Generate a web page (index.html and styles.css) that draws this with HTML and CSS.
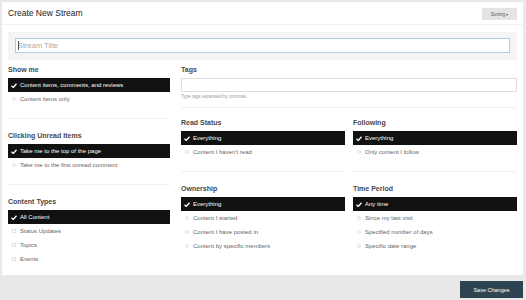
FILE: index.html
```html
<!DOCTYPE html>
<html>
  <head>
    <title>Create New Stream</title>
    <link rel="stylesheet" href="styles.css">
  </head>
  <body>
    <div class="panel">
      <div class="head">
        <h1>Create New Stream</h1>
        <button class="sort">Sorting <span class="caret">&#9662;</span></button>
      </div>
      <div class="title-band">
        <input class="title-input" type="text" placeholder="Stream Title">
        <span class="cursor"></span>
      </div>

      <div class="cols">
        <div class="left">
          <div class="group">
            <div class="label">Show me</div>
            <div class="opt on"><span class="ico"><svg width="6" height="5" viewBox="0 0 12 10"><path d="M1 5.5 L4.5 9 L11 1.5" /></svg></span>Content items, comments, and reviews</div>
            <div class="opt"><span class="ico"><span class="radio"></span></span>Content items only</div>
          </div>
          <div class="group">
            <div class="label">Clicking Unread Items</div>
            <div class="opt on"><span class="ico"><svg width="6" height="5" viewBox="0 0 12 10"><path d="M1 5.5 L4.5 9 L11 1.5" /></svg></span>Take me to the top of the page</div>
            <div class="opt"><span class="ico"><span class="radio"></span></span>Take me to the first unread comment</div>
          </div>
          <div class="group last">
            <div class="label">Content Types</div>
            <div class="opt on"><span class="ico"><svg width="6" height="5" viewBox="0 0 12 10"><path d="M1 5.5 L4.5 9 L11 1.5" /></svg></span>All Content</div>
            <div class="opt"><span class="ico"><span class="box"></span></span>Status Updates</div>
            <div class="opt"><span class="ico"><span class="box"></span></span>Topics</div>
            <div class="opt"><span class="ico"><span class="box"></span></span>Events</div>
          </div>
        </div>

        <div class="right">
          <div class="group tags">
            <div class="label">Tags</div>
            <input class="tag-input" type="text">
            <div class="help">Type tags separated by commas.</div>
          </div>
          <div class="pair">
            <div class="group">
              <div class="label">Read Status</div>
              <div class="opt on"><span class="ico"><svg width="6" height="5" viewBox="0 0 12 10"><path d="M1 5.5 L4.5 9 L11 1.5" /></svg></span>Everything</div>
              <div class="opt"><span class="ico"><span class="radio"></span></span>Content I haven't read</div>
            </div>
            <div class="group">
              <div class="label">Following</div>
              <div class="opt on"><span class="ico"><svg width="6" height="5" viewBox="0 0 12 10"><path d="M1 5.5 L4.5 9 L11 1.5" /></svg></span>Everything</div>
              <div class="opt"><span class="ico"><span class="radio"></span></span>Only content I follow</div>
            </div>
            <div class="group last">
              <div class="label">Ownership</div>
              <div class="opt on"><span class="ico"><svg width="6" height="5" viewBox="0 0 12 10"><path d="M1 5.5 L4.5 9 L11 1.5" /></svg></span>Everything</div>
              <div class="opt"><span class="ico"><span class="radio"></span></span>Content I started</div>
              <div class="opt"><span class="ico"><span class="radio"></span></span>Content I have posted in</div>
              <div class="opt"><span class="ico"><span class="radio"></span></span>Content by specific members</div>
            </div>
            <div class="group last">
              <div class="label">Time Period</div>
              <div class="opt on"><span class="ico"><svg width="6" height="5" viewBox="0 0 12 10"><path d="M1 5.5 L4.5 9 L11 1.5" /></svg></span>Any time</div>
              <div class="opt"><span class="ico"><span class="radio"></span></span>Since my last visit</div>
              <div class="opt"><span class="ico"><span class="radio"></span></span>Specified number of days</div>
              <div class="opt"><span class="ico"><span class="radio"></span></span>Specific date range</div>
            </div>
          </div>
        </div>
      </div>
    </div>

    <div class="footer">
      <button class="save">Save Changes</button>
    </div>
  </body>
</html>
```

FILE: styles.css
```css
body {
  margin: 0;
  background-color: #e9e9e9;
  font-family: "Liberation Sans", Arial, sans-serif;
}
.panel {
  margin: 2px 3px 0 2px;
  padding-bottom: 9px;
  background-color: #fff;
}
.head {
  display: flex;
  justify-content: space-between;
  align-items: center;
  height: 22px;
  padding: 0 6px;
  border-bottom: 1px solid #f1f1f1;
}
h1 {
  margin: 0;
  font-size: 8.5px;
  font-weight: normal;
  color: #222;
}
.sort {
  width: 35px;
  height: 12px;
  margin-top: 2px;
  padding: 0;
  border: none;
  background-color: #e4e4e4;
  color: #555;
  font-family: "Liberation Sans", Arial, sans-serif;
  font-size: 4.5px;
}
.caret {
  font-size: 4px;
}
.title-band {
  position: relative;
  margin: 7px 6px 0;
  padding: 6px 7px 7px;
  background-color: #f4f4f4;
}
.title-input {
  display: block;
  width: 100%;
  height: 15px;
  box-sizing: border-box;
  padding: 0 2px;
  border: 1px solid #a6d1ea;
  background-color: #fff;
  font-family: "Liberation Sans", Arial, sans-serif;
  font-size: 7.5px;
  outline: none;
}
.title-input::placeholder {
  color: #aaa;
}
.cursor {
  position: absolute;
  left: 10px;
  top: 9px;
  width: 1px;
  height: 9px;
  background-color: #555;
}
.cols {
  display: grid;
  grid-template-columns: 162px 1fr;
  column-gap: 11px;
  margin-top: 5px;
  padding: 0 6px;
}
.group {
  padding-bottom: 12px;
  margin-bottom: 12px;
  border-bottom: 1px solid #f1f1f1;
}
.group.last {
  padding-bottom: 0;
  margin-bottom: 0;
  border-bottom: none;
}
.group.tags {
  padding-bottom: 7px;
  margin-bottom: 10px;
}
.label {
  height: 10px;
  line-height: 10px;
  margin-bottom: 3px;
  font-size: 7px;
  font-weight: bold;
  color: #484848;
}
.opt {
  display: flex;
  align-items: center;
  height: 14px;
  font-size: 6px;
  color: #666;
}
.opt.on {
  background-color: #111;
  color: #fff;
}
.ico {
  display: flex;
  align-items: center;
  justify-content: center;
  width: 6px;
  margin: 0 3px;
}
.ico svg path {
  fill: none;
  stroke: #fff;
  stroke-width: 2.6;
}
.radio {
  width: 4px;
  height: 4px;
  box-sizing: border-box;
  border: 1px solid #e2e2e2;
  border-radius: 50%;
}
.box {
  width: 4px;
  height: 4px;
  box-sizing: border-box;
  border: 1px solid #e2e2e2;
}
.tag-input {
  display: block;
  width: 100%;
  height: 14px;
  box-sizing: border-box;
  border: 1px solid #ddd;
  outline: none;
}
.help {
  margin-top: 2px;
  line-height: 6px;
  font-size: 4.5px;
  color: #999;
}
.pair {
  display: grid;
  grid-template-columns: 1fr 1fr;
  column-gap: 8px;
}
.footer {
  display: flex;
  justify-content: flex-end;
  padding: 6px 3px 0;
}
.save {
  width: 63px;
  height: 17px;
  padding: 0;
  border: none;
  background-color: #2e4450;
  color: #fff;
  font-family: "Liberation Sans", Arial, sans-serif;
  font-size: 5.5px;
}
```
